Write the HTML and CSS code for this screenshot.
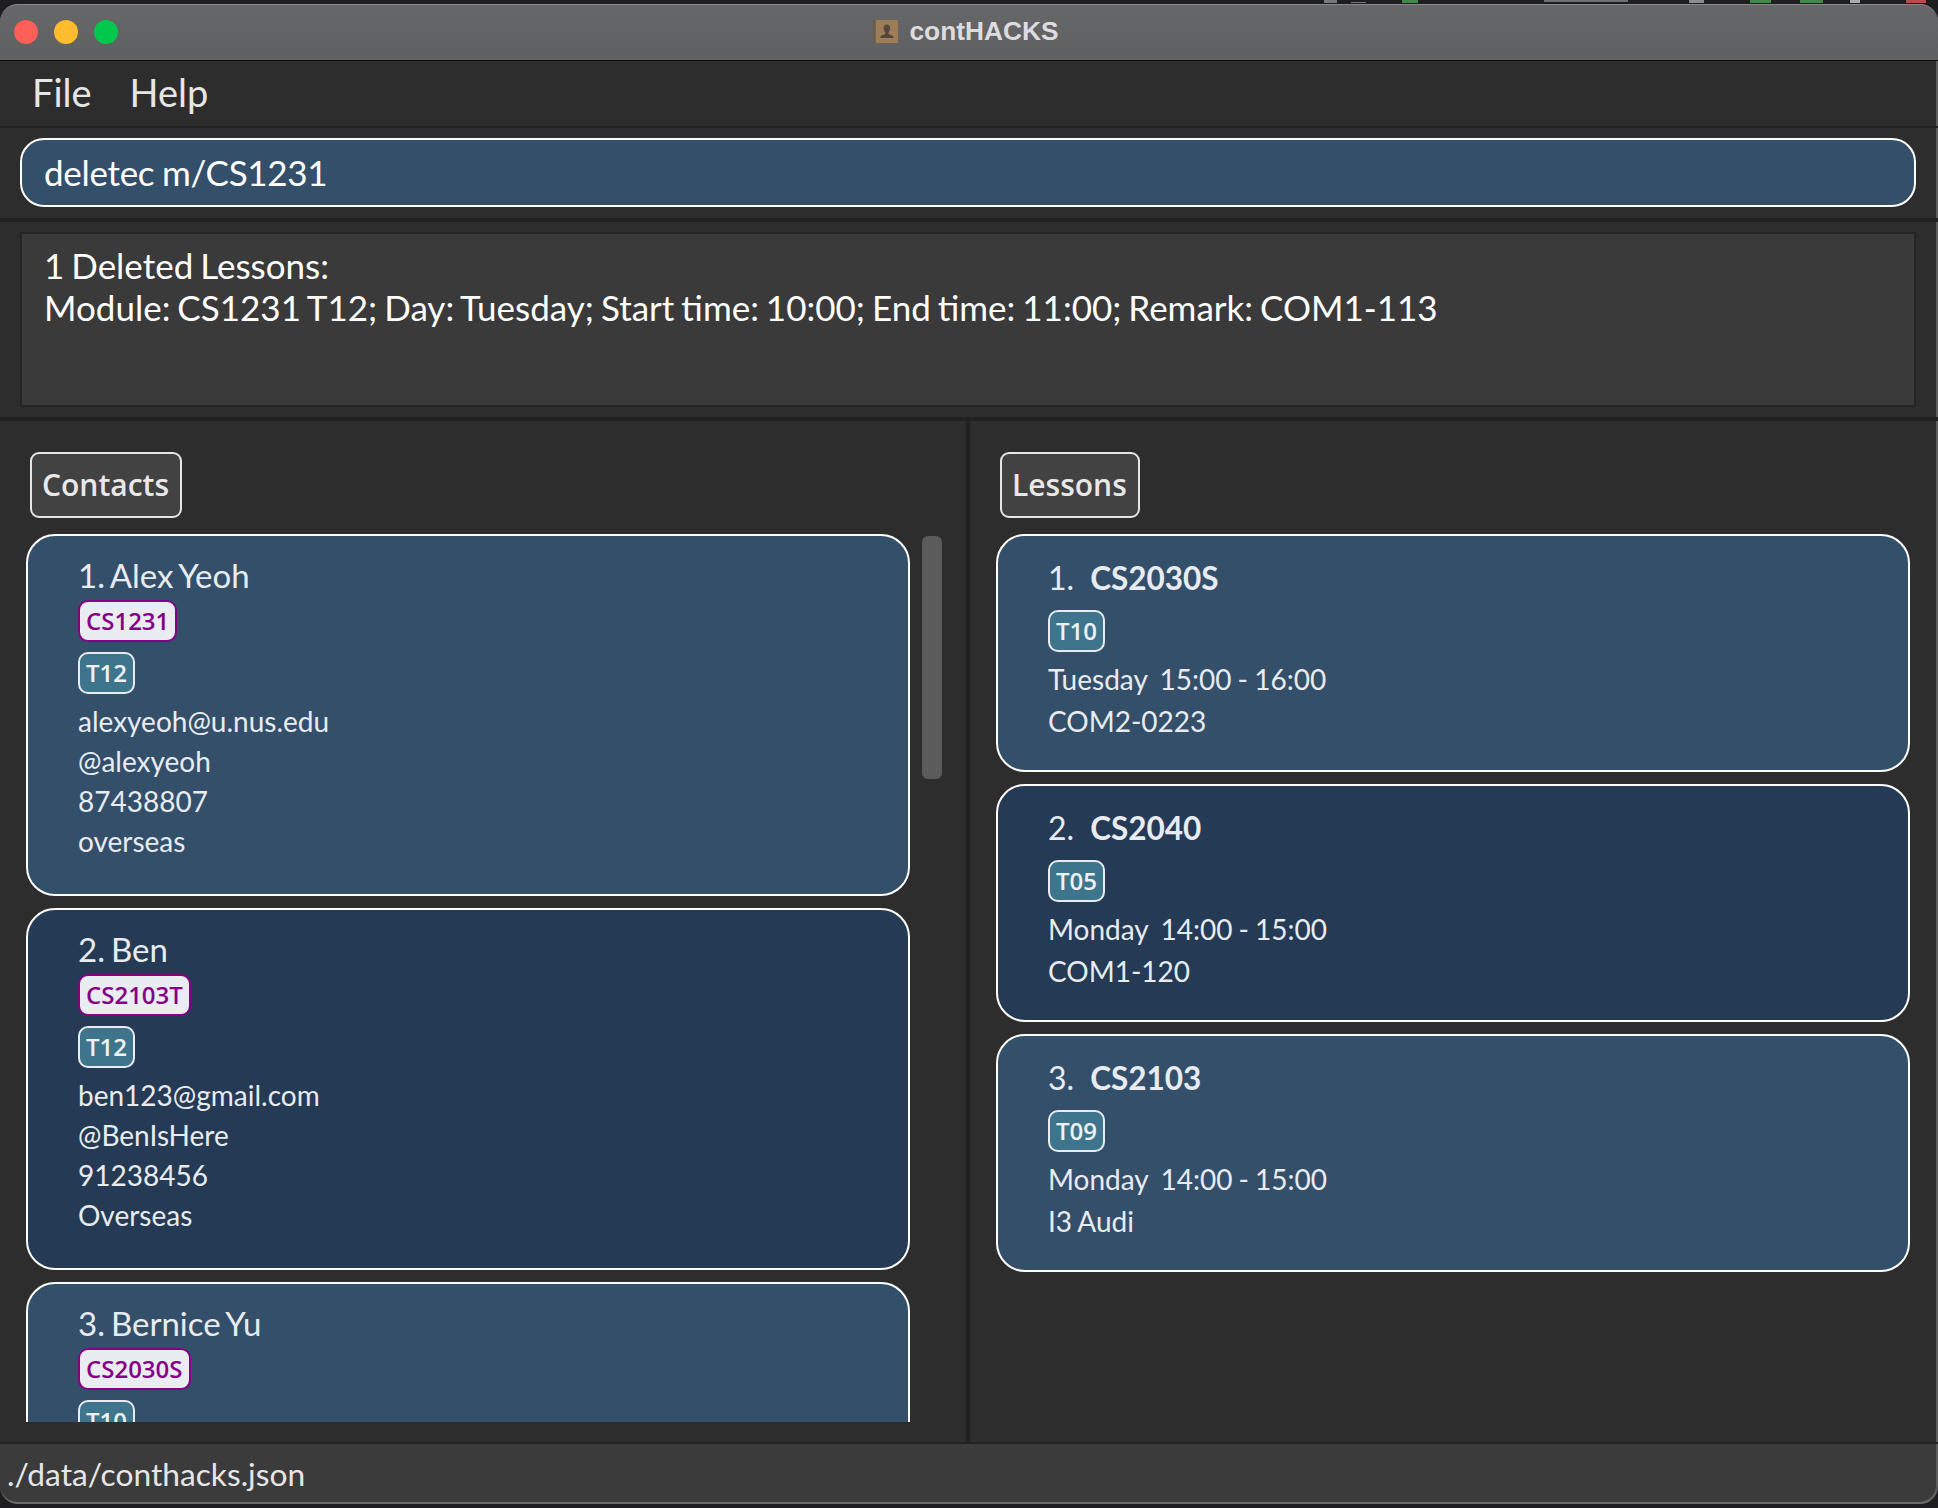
FILE: index.html
```html
<!DOCTYPE html>
<html lang="en">
<head>
    <meta charset="UTF-8">
    <meta name="viewport" content="width=device-width, initial-scale=1.0">
    <title>contHACKS</title>
    <link rel="stylesheet" href="styles.css">
</head>
<body>
    <!-- bits of the desktop that show above the window -->
    <svg class="desktop-strip" viewBox="0 0 1938 4">
        <rect x="1324" y="0" width="13" height="3" fill="#77797b"/>
        <rect x="1351" y="2" width="15" height="1" fill="#77797b"/>
        <rect x="1402" y="0" width="16" height="3" fill="#3f8a4a"/>
        <rect x="1544" y="0" width="84" height="2" fill="#6d6f71"/>
        <rect x="1689" y="0" width="15" height="3" fill="#8a8c8e"/>
        <rect x="1750" y="0" width="21" height="3" fill="#3f8a4a"/>
        <rect x="1800" y="0" width="23" height="3" fill="#3f8a4a"/>
        <rect x="1850" y="0" width="10" height="3" fill="#a9abad"/>
        <rect x="1906" y="0" width="20" height="3" fill="#b84c4c"/>
    </svg>

    <div class="window">
        <div class="titlebar">
            <div class="lights">
                <span class="light red"></span>
                <span class="light yellow"></span>
                <span class="light green"></span>
            </div>
            <div class="title">
                <svg class="title-icon" viewBox="0 0 27 25">
                    <rect x="0" y="0" width="27" height="25" rx="1" fill="#6b5d4e"/>
                    <rect x="3" y="0" width="24" height="25" fill="#9c7d58"/>
                    <path d="M15 5c-2.400 0-3.500 2-3.500 4s1 3.500 1.800 4.500v1.500c-1 1-4.300 1.500-5.300 3v1.500h14v-1.500c-1-1.500-4.300-2-5.300-3v-1.500c.8-1 1.800-2.500 1.800-4.500s-1.100-4-3.500-4z" fill="#54473b"/>
                </svg>
                <span>contHACKS</span>
            </div>
        </div>

        <div class="menubar">
            <span>File</span>
            <span>Help</span>
        </div>

        <div class="command-area">
            <div class="command-box">deletec m/CS1231</div>
        </div>

        <div class="result-area">
            <div class="result-box">1 Deleted Lessons:<br>Module: CS1231 T12; Day: Tuesday; Start time: 10:00; End time: 11:00; Remark: COM1-113</div>
        </div>

        <div class="panels">
            <div class="panel panel-contacts">
                <div class="panel-label">Contacts</div>
                <div class="list-row">
                    <div class="list">
                        <div class="card">
                            <div class="name">1. Alex Yeoh</div>
                            <div class="tags"><span class="tag module">CS1231</span></div>
                            <div class="tags"><span class="tag tut">T12</span></div>
                            <div class="details">
                                <div>alexyeoh@u.nus.edu</div>
                                <div>@alexyeoh</div>
                                <div>87438807</div>
                                <div>overseas</div>
                            </div>
                        </div>
                        <div class="card alt">
                            <div class="name">2. Ben</div>
                            <div class="tags"><span class="tag module">CS2103T</span></div>
                            <div class="tags"><span class="tag tut">T12</span></div>
                            <div class="details">
                                <div>ben123@gmail.com</div>
                                <div>@BenIsHere</div>
                                <div>91238456</div>
                                <div>Overseas</div>
                            </div>
                        </div>
                        <div class="card">
                            <div class="name">3. Bernice Yu</div>
                            <div class="tags"><span class="tag module">CS2030S</span></div>
                            <div class="tags"><span class="tag tut">T10</span></div>
                        </div>
                    </div>
                    <div class="scrollbar"><div class="thumb"></div></div>
                </div>
            </div>

            <div class="panel panel-lessons">
                <div class="panel-label">Lessons</div>
                <div class="list">
                    <div class="card lesson">
                        <div class="lesson-title"><span>1.</span><b>CS2030S</b></div>
                        <div class="tags"><span class="tag tut">T10</span></div>
                        <div class="details">
                            <div>Tuesday&nbsp; 15:00 - 16:00</div>
                            <div>COM2-0223</div>
                        </div>
                    </div>
                    <div class="card lesson alt">
                        <div class="lesson-title"><span>2.</span><b>CS2040</b></div>
                        <div class="tags"><span class="tag tut">T05</span></div>
                        <div class="details">
                            <div>Monday&nbsp; 14:00 - 15:00</div>
                            <div>COM1-120</div>
                        </div>
                    </div>
                    <div class="card lesson">
                        <div class="lesson-title"><span>3.</span><b>CS2103</b></div>
                        <div class="tags"><span class="tag tut">T09</span></div>
                        <div class="details">
                            <div>Monday&nbsp; 14:00 - 15:00</div>
                            <div>I3 Audi</div>
                        </div>
                    </div>
                </div>
            </div>
        </div>

        <div class="statusbar">./data/conthacks.json</div>
    </div>
</body>
</html>
```

FILE: styles.css
```css
html, body {
    height: 100%;
}
body {
    margin: 0;
    background: #1e1e20;
    font-family: Lato, sans-serif;
    overflow: hidden;
}
.desktop-strip {
    position: absolute;
    left: 0;
    top: 0;
    width: 1938px;
    height: 4px;
}
.window {
    box-sizing: border-box;
    width: 1938px;
    height: 1504px;
    padding-top: 4px;
    display: flex;
    flex-direction: column;
    position: relative;
}
.titlebar {
    box-sizing: border-box;
    height: 57px;
    flex: none;
    display: flex;
    align-items: center;
    justify-content: center;
    padding: 0 6px 2px 0;
    position: relative;
    background: linear-gradient(#666768, #5f6061);
    border-top: 1px solid #8a8a8a;
    border-bottom: 1px solid #0c0c0c;
    border-radius: 18px 18px 0 0;
}
.lights {
    position: absolute;
    left: 14px;
    top: 15px;
    display: flex;
    gap: 16px;
}
.light {
    width: 24px;
    height: 24px;
    border-radius: 50%;
}
.red { background: #ff5f57; }
.yellow { background: #febc2e; }
.green { background: #00c84d; }
.title {
    display: flex;
    align-items: center;
    gap: 11px;
    font-family: "Liberation Sans", sans-serif;
    font-weight: 700;
    font-size: 26.3px;
    color: #dcdcde;
}
.title-icon {
    width: 25px;
    height: 25px;
}
.menubar {
    box-sizing: border-box;
    height: 67px;
    flex: none;
    display: flex;
    align-items: center;
    gap: 38px;
    padding: 0 0 4px 32px;
    background: #2d2d2d;
    border-bottom: 2px solid #232323;
    box-shadow: inset -2px 0 #5e5e5e;
    font-size: 38px;
    color: #e6e6e6;
}
.command-area {
    box-sizing: border-box;
    height: 94px;
    flex: none;
    padding: 10px 22px 11px 20px;
    background: #2d2d2d;
    border-bottom: 4px solid #222222;
    box-shadow: inset -2px 0 #5e5e5e;
}
.command-box {
    box-sizing: border-box;
    height: 69px;
    padding: 0 22px 2px;
    display: flex;
    align-items: center;
    background: #344f6a;
    border: 2px solid #ffffff;
    border-radius: 24px;
    font-size: 35px;
    letter-spacing: -0.3px;
    word-spacing: -1px;
    color: #ffffff;
}
.result-area {
    box-sizing: border-box;
    height: 199px;
    flex: none;
    padding: 10px 22px 10px 20px;
    background: #2d2d2d;
    border-bottom: 4px solid #222222;
    box-shadow: inset -2px 0 #5e5e5e;
}
.result-box {
    box-sizing: border-box;
    height: 175px;
    padding: 10px 22px;
    background: #3a3a3a;
    border: 2px solid #242424;
    font-size: 35px;
    line-height: 42px;
    word-spacing: -2px;
    color: #ffffff;
}
.panels {
    flex: 1;
    min-height: 0;
    display: flex;
    background: #2d2d2d;
    box-shadow: inset -2px 0 #5e5e5e;
}
.panel {
    box-sizing: border-box;
    display: flex;
    flex-direction: column;
    padding-top: 31px;
}
.panel-contacts {
    width: 970px;
    padding: 31px 0 20px 26px;
    border-right: 4px solid #222222;
}
.panel-lessons {
    flex: 1;
    padding-left: 26px;
    padding-right: 28px;
}
.panel-label {
    box-sizing: border-box;
    align-self: flex-start;
    height: 66px;
    margin: 0 0 16px 4px;
    padding: 0 11px 2px 10px;
    display: flex;
    align-items: center;
    background: #424242;
    border: 2px solid #e6e6e6;
    border-radius: 9px;
    font-family: "Open Sans", sans-serif;
    font-weight: 600;
    font-size: 30px;
    color: #e8e8e8;
}
.list-row {
    flex: 1;
    min-height: 0;
    display: flex;
    gap: 12px;
}
.list {
    flex: 1;
    min-width: 0;
    display: flex;
    flex-direction: column;
    gap: 12px;
    overflow: hidden;
}
.panel-contacts .list {
    flex: none;
    width: 884px;
}
.scrollbar {
    width: 20px;
    flex: none;
    padding-top: 2px;
}
.thumb {
    height: 243px;
    background: #5b5b5b;
    border-radius: 6px;
}
.card {
    box-sizing: border-box;
    height: 362px;
    flex: none;
    padding: 19px 50px;
    background: #344f6a;
    border: 2px solid #ffffff;
    border-radius: 29px;
    color: #e8ecf1;
}
.card.alt {
    background: #253a54;
}
.card.lesson {
    height: 238px;
    padding-top: 21px;
}
.name {
    font-size: 33px;
    line-height: 40px;
    word-spacing: -2.5px;
}
.lesson-title {
    display: flex;
    gap: 16px;
    font-size: 32px;
    line-height: 42px;
}
.lesson-title b {
    font-family: Lato, sans-serif;
    font-weight: 700;
    font-size: 31.5px;
}
.tags {
    display: flex;
    margin-top: 5px;
}
.tags + .tags {
    margin-top: 10px;
}
.lesson .tags {
    margin-top: 11px;
}
.tag {
    box-sizing: border-box;
    height: 42px;
    padding: 0 6px 1px;
    display: flex;
    align-items: center;
    border: 2px solid #e8ecf1;
    border-radius: 10px;
    font-family: "Open Sans", sans-serif;
    font-weight: 600;
    font-size: 24px;
}
.tag.module {
    background: #e9ecf1;
    border-color: #860086;
    color: #860086;
}
.tag.tut {
    background: #3e758d;
    color: #eef2f5;
}
.details {
    margin-top: 7px;
    font-size: 28px;
    line-height: 40px;
    word-spacing: -1px;
}
.lesson .details {
    line-height: 42px;
    margin-top: 6px;
}
.statusbar {
    box-sizing: border-box;
    height: 62px;
    flex: none;
    padding: 1px 0 0 7px;
    display: flex;
    align-items: center;
    background: #3b3b3b;
    border-top: 2px solid #222222;
    border-bottom: 2px solid #6a6a6a;
    box-shadow: inset -2px 0 #5e5e5e;
    border-radius: 0 0 18px 18px;
    font-size: 31.7px;
    color: #e6e6e6;
}
```
